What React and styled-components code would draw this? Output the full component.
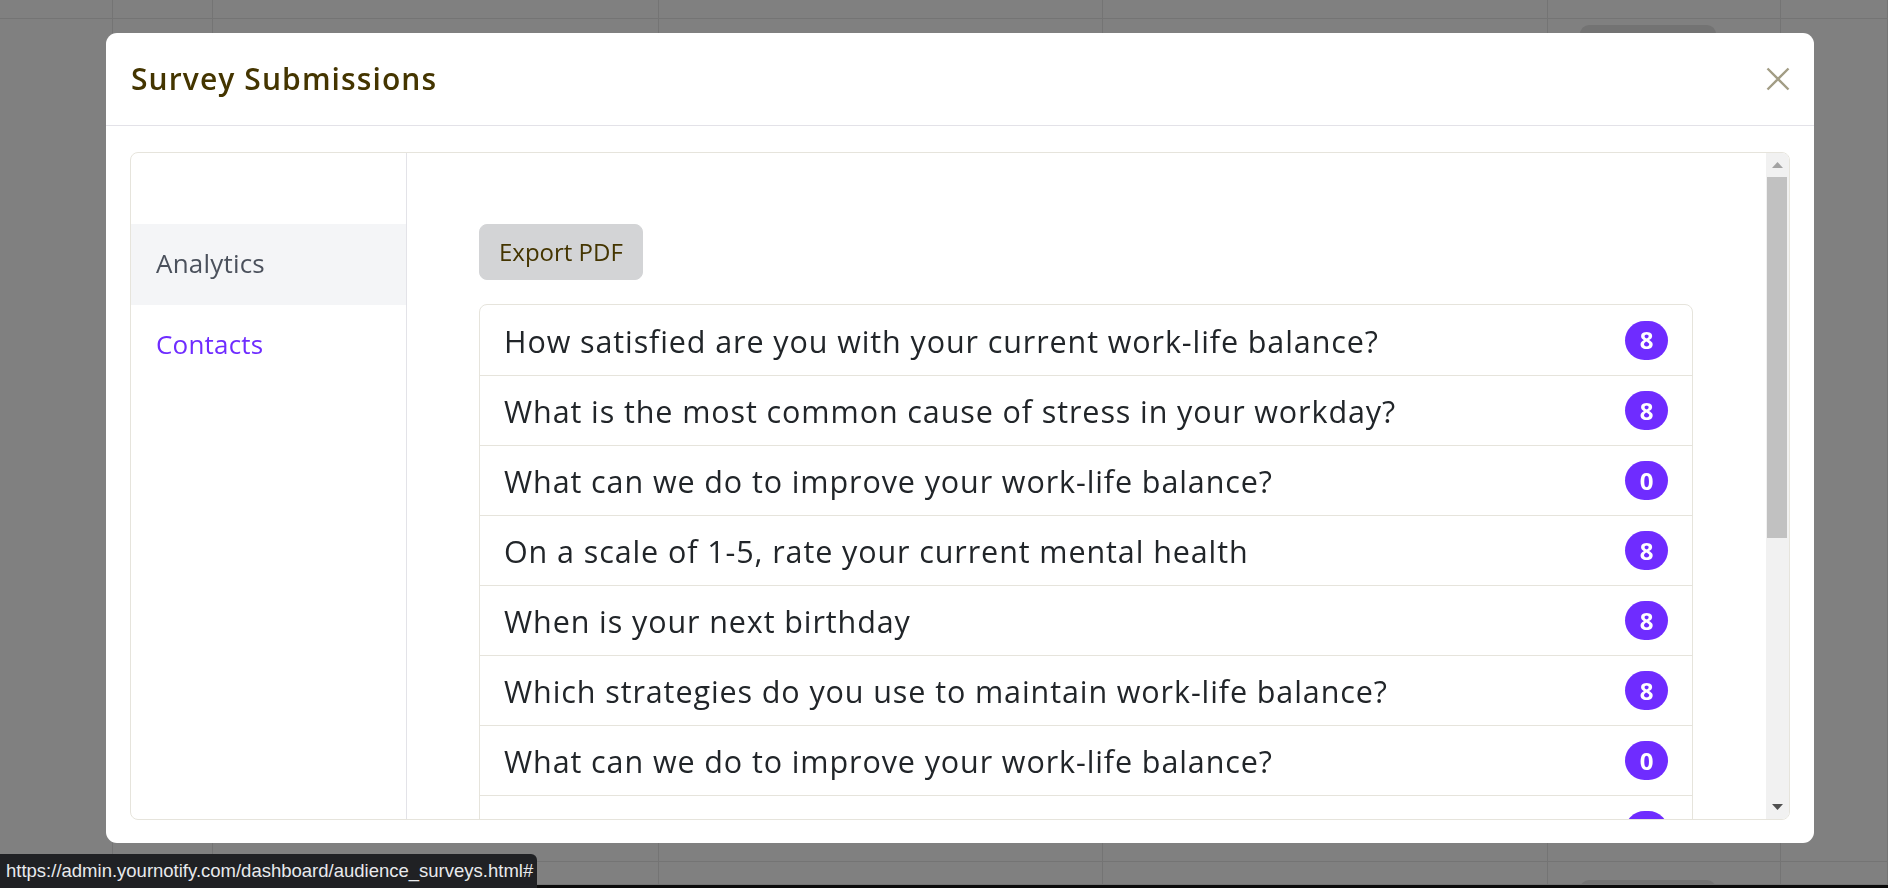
import React from "react";
import styled, { createGlobalStyle } from "styled-components";

const questions = [
  { text: "How satisfied are you with your current work-life balance?", count: 8 },
  { text: "What is the most common cause of stress in your workday?", count: 8 },
  { text: "What can we do to improve your work-life balance?", count: 0 },
  { text: "On a scale of 1-5, rate your current mental health", count: 8 },
  { text: "When is your next birthday", count: 8 },
  { text: "Which strategies do you use to maintain work-life balance?", count: 8 },
  { text: "What can we do to improve your work-life balance?", count: 0 },
  { text: "What can we do to improve your work-life balance?", count: 8 },
  { text: "How satisfied are you with your current work-life balance?", count: 8 },
  { text: "What is the most common cause of stress in your workday?", count: 8 },
  { text: "On a scale of 1-5, rate your current mental health", count: 8 },
  { text: "When is your next birthday", count: 8 },
  { text: "Which strategies do you use to maintain work-life balance?", count: 8 },
];

// the table that sits behind the modal backdrop
const columns = [113, 100, 446, 444, 445, 233, 107];
const rows = [7, 855, 23];

function App() {
  return (
    <>
      <GlobalStyle />
      <Backdrop>
        {rows.map((h, r) =>
          columns.map((w, c) => (
            <Cell key={`${r}-${c}`}>
              {c === 5 && r > 0 ? <RowButton /> : null}
            </Cell>
          ))
        )}
        <PageEdge />
      </Backdrop>

      <Overlay>
        <Modal>
          <ModalHeader>
            <ModalTitle>Survey Submissions</ModalTitle>
            <CloseButton aria-label="Close">
              <svg width="24" height="24" viewBox="0 0 24 24">
                <path
                  d="M1.5 1.5 L22.5 22.5 M22.5 1.5 L1.5 22.5"
                  stroke="#a29d85"
                  strokeWidth="2.4"
                  fill="none"
                />
              </svg>
            </CloseButton>
          </ModalHeader>

          <ModalBody>
            <Panel>
              <Sidebar>
                <NavItem shaded>Analytics</NavItem>
                <NavItem accent>Contacts</NavItem>
              </Sidebar>

              <Content>
                <ExportButton>Export PDF</ExportButton>
                <QuestionList>
                  {questions.map((q, i) => (
                    <QuestionRow key={i}>
                      <span>{q.text}</span>
                      <Badge>{q.count}</Badge>
                    </QuestionRow>
                  ))}
                </QuestionList>
              </Content>

              <ScrollTrack>
                <ScrollArrow>
                  <svg width="11" height="6" viewBox="0 0 11 6">
                    <path d="M0 6 L5.5 0 L11 6 Z" fill="#a3a3a3" />
                  </svg>
                </ScrollArrow>
                <ThumbLane>
                  <Thumb size={361} />
                </ThumbLane>
                <ScrollArrow>
                  <svg width="11" height="6" viewBox="0 0 11 6">
                    <path d="M0 0 L11 0 L5.5 6 Z" fill="#505050" />
                  </svg>
                </ScrollArrow>
              </ScrollTrack>
            </Panel>
          </ModalBody>
        </Modal>
      </Overlay>

      <StatusBubble>https://admin.yournotify.com/dashboard/audience_surveys.html#</StatusBubble>
    </>
  );
}

const GlobalStyle = createGlobalStyle`
  html, body {
    margin: 0;
    padding: 0;
  }
  body {
    width: 1888px;
    height: 888px;
    overflow: hidden;
    background: #808080;
    font-family: "Open Sans", "Noto Sans", sans-serif;
  }
  * {
    box-sizing: border-box;
  }
`;

const Backdrop = styled.div`
  display: grid;
  grid-template-columns: 113px 100px 446px 444px 445px 233px 107px;
  grid-template-rows: 7px 855px 23px 3px;
  width: 1888px;
  height: 888px;
  background: #808080;
`;

const Cell = styled.div`
  border-right: 1px solid #747474;
  border-bottom: 1px solid #747474;
  padding: 18px 0 0 32px;
  overflow: hidden;
`;

const RowButton = styled.div`
  width: 136px;
  height: 40px;
  border-radius: 9px;
  background: #737373;
`;

const PageEdge = styled.div`
  grid-column: 1 / -1;
  background: #0b0b0b;
`;

const Overlay = styled.div`
  position: fixed;
  inset: 0;
  display: flex;
  padding: 33px 74px 45px 106px;
`;

const Modal = styled.div`
  flex: 1;
  display: flex;
  flex-direction: column;
  background: #ffffff;
  border-radius: 11px;
  overflow: hidden;
`;

const ModalHeader = styled.div`
  height: 93px;
  flex-shrink: 0;
  display: flex;
  align-items: center;
  justify-content: space-between;
  padding: 0 24px 0 25px;
  border-bottom: 1px solid #e3e2e8;
`;

const ModalTitle = styled.h5`
  margin: 0 0 2px;
  font-size: 30px;
  font-weight: 600;
  letter-spacing: 1.1px;
  color: #443500;
`;

const CloseButton = styled.button`
  width: 24px;
  height: 24px;
  padding: 0;
  border: 0;
  background: transparent;
  display: flex;
  cursor: pointer;
`;

const ModalBody = styled.div`
  flex: 1;
  min-height: 0;
  display: flex;
  padding: 26px 24px 23px 24px;
`;

const Panel = styled.div`
  flex: 1;
  min-height: 0;
  display: flex;
  border: 1px solid #e6e4dc;
  border-radius: 8px;
  overflow: hidden;
`;

const Sidebar = styled.nav`
  width: 276px;
  flex-shrink: 0;
  padding-top: 71px;
  border-right: 1px solid #e3e3e8;
`;

const NavItem = styled.div`
  height: 81px;
  display: flex;
  align-items: center;
  padding: 0 0 4px 25px;
  font-size: 26px;
  letter-spacing: 0.2px;
  color: ${(p) => (p.accent ? "#6f2cff" : "#4b515c")};
  background: ${(p) => (p.shaded ? "#f4f5f7" : "transparent")};
`;

const Content = styled.div`
  flex: 1;
  min-width: 0;
  overflow: hidden;
  padding: 71px 73px 72px 72px;
`;

const ScrollTrack = styled.div`
  width: 23px;
  flex-shrink: 0;
  display: flex;
  flex-direction: column;
  background: #f1f1f1;
`;

const ScrollArrow = styled.div`
  height: 24px;
  flex-shrink: 0;
  display: flex;
  align-items: center;
  justify-content: center;
  padding-right: 1px;
`;

const ThumbLane = styled.div`
  flex: 1;
  padding: 0 2px 0 1px;
`;

const Thumb = styled.div`
  height: ${(p) => p.size}px;
  background: #c1c1c1;
`;

const ExportButton = styled.button`
  height: 56px;
  padding: 0 19px 2px;
  border: 1px solid #d3d4d6;
  border-radius: 8px;
  background: #d3d4d6;
  color: #443500;
  font-family: "Open Sans", "Noto Sans", sans-serif;
  font-size: 24px;
  cursor: pointer;
`;

const QuestionList = styled.div`
  margin-top: 24px;
  border: 1px solid #e6e4dc;
  border-radius: 8px;
`;

const QuestionRow = styled.div`
  height: 70px;
  display: flex;
  align-items: center;
  justify-content: space-between;
  padding: 0 24px;
  font-size: 30.5px;
  letter-spacing: 0.9px;
  color: #212529;
  white-space: nowrap;

  & > span:first-child {
    margin-top: 1px;
  }

  & + & {
    border-top: 1px solid #e6e4dc;
  }
`;

const Badge = styled.span`
  height: 39px;
  min-width: 43px;
  padding: 0 14px 1px;
  display: flex;
  align-items: center;
  justify-content: center;
  border-radius: 20px;
  background: #6f2cff;
  color: #ffffff;
  font-size: 24px;
  font-weight: 700;
  letter-spacing: 0;
`;

const StatusBubble = styled.div`
  position: fixed;
  left: 0;
  bottom: 0;
  width: 537px;
  height: 34px;
  display: flex;
  align-items: center;
  padding-left: 6px;
  background: #202124;
  border-top-right-radius: 6px;
  color: #e8eaed;
  font-family: "Liberation Sans", Arial, sans-serif;
  font-size: 18.5px;
  white-space: nowrap;
`;

export default App;
